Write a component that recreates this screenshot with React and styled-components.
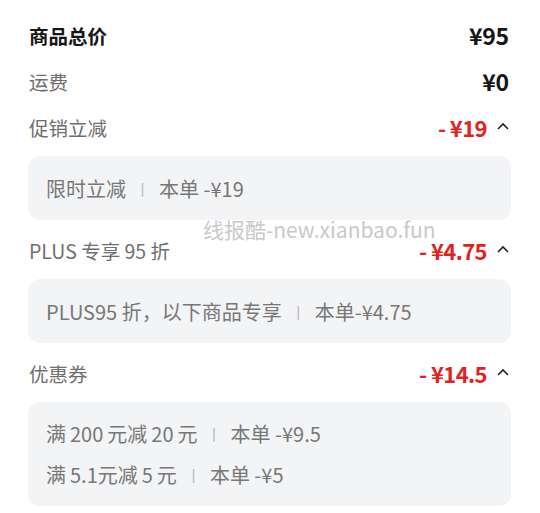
import React from "react";
import styled, { createGlobalStyle } from "styled-components";

const GlobalStyle = createGlobalStyle`
  html, body {
    margin: 0;
    padding: 0;
    background: #ffffff;
  }
  body {
    font-family: "Noto Sans CJK SC", "Noto Sans", sans-serif;
  }
`;

const sections = [
  { label: "商品总价", value: "¥95", strong: true },
  { label: "运费", value: "¥0" },
  {
    label: "促销立减",
    value: "- ¥19",
    discount: true,
    details: [["限时立减", "本单 -¥19"]],
  },
  {
    label: "PLUS 专享 95 折",
    value: "- ¥4.75",
    discount: true,
    details: [["PLUS95 折，以下商品专享", "本单-¥4.75"]],
  },
  {
    label: "优惠券",
    value: "- ¥14.5",
    discount: true,
    details: [
      ["满\u2009200\u2009元减\u200920\u2009元", "本单 -¥9.5"],
      ["满\u20095.1元减\u20095\u2009元", "本单 -¥5"],
    ],
  },
];

export default function App() {
  return (
    <>
      <GlobalStyle />
      <Page>
        {sections.map((s) => (
          <Section key={s.label} $hasBox={!!s.details}>
            <Row>
              <Label $strong={s.strong}>{s.label}</Label>
              <ValueWrap>
                <Value $discount={s.discount}>{s.value}</Value>
                {s.discount && (
                  <Chevron viewBox="0 0 12 8">
                    <polyline points="1,7 6,2 11,7" />
                  </Chevron>
                )}
              </ValueWrap>
            </Row>
            {s.details && (
              <DetailBox $multi={s.details.length > 1}>
                {s.details.map(([name, amount]) => (
                  <DetailLine key={name}>
                    {name}
                    <Sep>丨</Sep>
                    {amount}
                  </DetailLine>
                ))}
              </DetailBox>
            )}
          </Section>
        ))}
        <Watermark>线报酷-new.xianbao.fun</Watermark>
      </Page>
    </>
  );
}

const Page = styled.div`
  position: relative;
  width: 540px;
  height: 513px;
  box-sizing: border-box;
  padding: 12px 29px 0 28px;
  overflow: hidden;
`;

const Section = styled.div`
  margin-bottom: ${(p) => (p.$hasBox ? "7px" : "0")};
`;

const Row = styled.div`
  display: flex;
  align-items: center;
  justify-content: space-between;
  height: 46px;
  padding: 0 2px 0 1px;
`;

const Label = styled.span`
  font-size: 19.5px;
  color: ${(p) => (p.$strong ? "#161616" : "#6f6f6f")};
  font-weight: ${(p) => (p.$strong ? 700 : 400)};
`;

const ValueWrap = styled.div`
  display: flex;
  align-items: center;
  gap: 10px;
`;

const Value = styled.span`
  font-size: ${(p) => (p.$discount ? "22px" : "23px")};
  font-weight: 700;
  color: ${(p) => (p.$discount ? "#e3231b" : "#161616")};
  letter-spacing: ${(p) => (p.$discount ? "-0.6px" : "-0.2px")};
`;

const Chevron = styled.svg`
  width: 12px;
  height: 8px;
  fill: none;
  stroke: #222;
  stroke-width: 1.6;
  margin-bottom: 3px;
`;

const DetailBox = styled.div`
  margin-top: 6px;
  box-sizing: border-box;
  height: ${(p) => (p.$multi ? "104px" : "64px")};
  background: #f3f4f6;
  border-radius: 12px;
  padding: 0 18px;
  display: flex;
  flex-direction: column;
  justify-content: center;
  gap: 17px;
`;

const DetailLine = styled.div`
  display: flex;
  align-items: center;
  height: 24px;
  font-size: 20px;
  color: #777777;
  white-space: pre;
`;

const Sep = styled.span`
  color: #b8b8b8;
  font-size: 15px;
  margin: 0 9px;
`;

const Watermark = styled.div`
  position: absolute;
  left: 203px;
  top: 214px;
  font-size: 21px;
  color: #c9c9c9;
  pointer-events: none;
  font-family: "Noto Sans CJK SC", "Open Sans", sans-serif;
`;
